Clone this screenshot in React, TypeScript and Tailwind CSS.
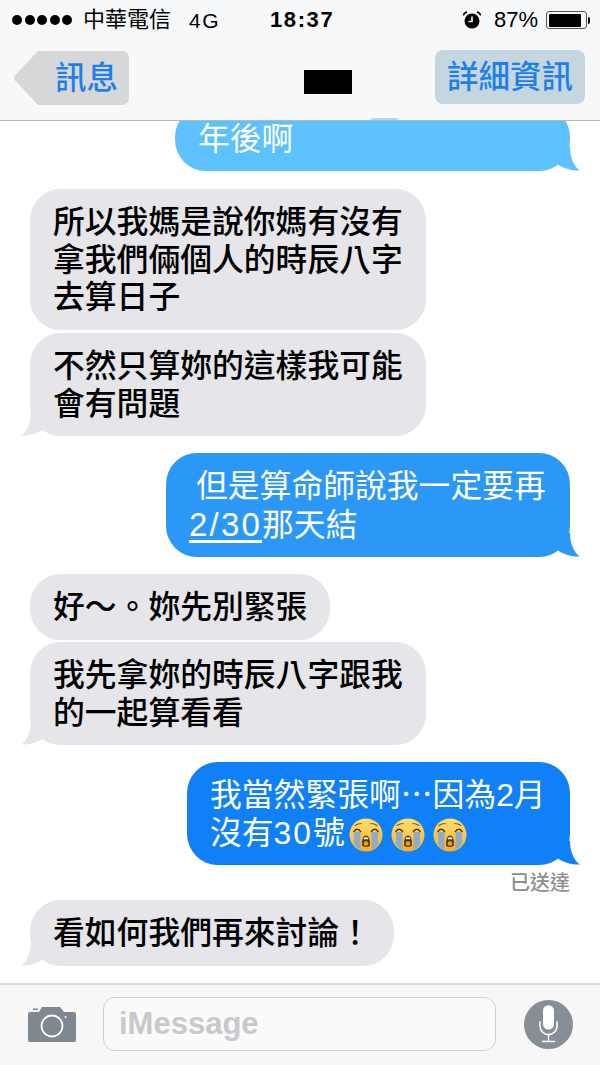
import React from 'react'

const FONT = '[font-family:"Liberation_Sans","Noto_Sans_CJK_TC",sans-serif]'

type BubbleProps = {
  side: 'left' | 'right'
  color: string
  className?: string
  children: React.ReactNode
  tail?: boolean
}

const Tail = ({ side, fill }: { side: 'left' | 'right'; fill: string }) => (
  <svg
    viewBox="0 0 24 24"
    className={side === 'right' ? 'absolute bottom-0 right-[-10px] h-6 w-6' : 'absolute bottom-0 left-[-9px] h-6 w-6 -scale-x-100'}
    fill={fill}
  >
    <path d="M14 0C14 10 18 20 24 23.5C18 24 8 22 1 17L0 0Z" />
  </svg>
)

const Bubble = ({ side, color, className, children, tail = true }: BubbleProps) => {
  const bg = color === '#e5e5ea' ? 'bg-[#e5e5ea] text-black font-medium' : color === '#5cc1fd' ? 'bg-[#5cc1fd] text-white' : color === '#2b98f8' ? 'bg-[#2b98f8] text-white' : 'bg-[#0f80f7] text-white'
  return (
    <div className={`relative rounded-[31px] pb-[13px] pl-[23px] pt-[15px] text-[31.8px] leading-[37.5px] ${bg} ${side === 'right' ? 'self-end mr-[30px]' : 'self-start ml-[30px]'} ${className ?? ''}`}>
      {children}
      {tail && <Tail side={side} fill={color} />}
    </div>
  )
}

// loudly crying face
const CryFace = () => (
  <svg viewBox="0 0 34 34" className="mx-[4px] inline-block h-[34px] w-[34px] align-[-8px]">
    <defs>
      <linearGradient id="cry" x1="0" y1="0" x2="0" y2="1">
        <stop offset="0" stopColor="#ffe070" />
        <stop offset="1" stopColor="#f8ac2c" />
      </linearGradient>
    </defs>
    <circle cx="17" cy="17" r="16.5" fill="url(#cry)" />
    <path d="M5 14h6.5v17.5C8.5 30 6 28 5 26Z" fill="#8fabc8" />
    <path d="M22.5 14H29v12c-1 2-3.500 4-6.500 5.500Z" fill="#8fabc8" />
    <path d="M5 13.500c1.500-3 5-3 6.500 0M22.500 13.500c1.500-3 5-3 6.500 0" fill="none" stroke="#4a3410" strokeWidth="1.600" strokeLinecap="round" />
    <path d="M6 7.500c2-1.500 4-2 6-2M28 7.500c-2-1.500-4-2-6-2" fill="none" stroke="#8a5a10" strokeWidth="1.200" strokeLinecap="round" />
    <path d="M13 27c0-6.500 1.500-9.500 4-9.500S21 20.500 21 27c0 2.500-8 2.500-8 0Z" fill="#5b3a12" />
    <path d="M14.600 20c1.200-1 3.600-1 4.800 0l-.5 1.300h-3.800Z" fill="#fff" />
    <ellipse cx="17" cy="25.500" rx="2.400" ry="2.200" fill="#e9a12f" />
  </svg>
)

const StatusBar = () => (
  <div className="flex h-[40px] items-center pl-[12px] pr-[10px] text-[22px] text-black">
    <div className="flex gap-[2.500px]">
      {[0, 1, 2, 3, 4].map((i) => (
        <span key={i} className="h-[10px] w-[10px] rounded-full bg-black" />
      ))}
    </div>
    <span className="ml-[11px] w-[106px] leading-none">中華電信</span>
    <span className="text-[21px] leading-none tracking-[1.5px]">4G</span>
    <span className="ml-[50px] text-[22px] font-bold leading-none tracking-[1.6px]">18:37</span>
    <svg viewBox="0 0 20 20" className="ml-auto mr-[2px] h-[20px] w-[20px]">
      <circle cx="10" cy="11" r="7.500" fill="#000" />
      <path d="M10 6.500V11.500H6.500" fill="none" stroke="#fff" strokeWidth="1.600" />
      <path d="M1.500 5.500Q2 2.500 5 2M18.500 5.500Q18 2.500 15 2" fill="none" stroke="#000" strokeWidth="1.500" />
    </svg>
    <span className="ml-[10px] leading-none">87%</span>
    <div className="ml-[8px] flex items-center">
      <div className="h-[18px] w-[41px] rounded-[3px] border border-[#555] p-[1.500px]">
        <div className="h-full w-[90%] rounded-[1px] bg-black" />
      </div>
      <div className="ml-[1px] h-[7px] w-[2px] rounded-r-full bg-black" />
    </div>
  </div>
)

const NavBar = () => (
  <div className="flex h-[80px] items-start pl-[14px] pr-[15px] pt-[10px]">
    <div className="relative ml-[24px] mt-[1px] flex h-[54px] w-[91px] items-center rounded-r-[7px] bg-[#d6d7d8] pl-[17px] pt-[1px] text-[31.5px] font-medium leading-none text-[#1f7fe8]">
      <svg viewBox="0 0 24 54" className="absolute left-[-24px] top-0 h-[54px] w-[24px]" fill="#d6d7d8">
        <path d="M24 0V54L1 29.500Q-1 27 1 24.500Z" />
      </svg>
      訊息
    </div>
    <div className="ml-[175px] mt-[20px] h-[24px] w-[48px] bg-black" />
    <div className="ml-auto flex h-[54px] w-[150px] items-center justify-center rounded-[8px] bg-[#c5d6e0] pt-[2px] text-[31.5px] font-medium leading-none text-[#1f7fe8]">
      詳細資訊
    </div>
  </div>
)

const Composer = () => (
  <div className="flex h-[82px] items-center border-t-2 border-[#d9d9d9] bg-[#f7f7f8] pb-[2px] pl-[28px] pr-[27px]">
    <svg viewBox="0 0 48 36" className="h-[36px] w-[48px]">
      <path d="M2 6h9l3-5h18l4 5h10a2 2 0 0 1 2 2v26a2 2 0 0 1-2 2H2a2 2 0 0 1-2-2V8a2 2 0 0 1 2-2Z" fill="#7f8791" />
      <circle cx="24" cy="20" r="10.500" fill="none" stroke="#fff" strokeWidth="1.800" />
      <circle cx="37.500" cy="11" r="1" fill="#fff" />
      <rect x="5" y="2.500" width="5" height="1.500" fill="#7f8791" />
    </svg>
    <div className="ml-[27px] flex h-[54px] flex-1 items-center rounded-[12px] border border-[#cfcfd3] bg-[#fafafa] pl-[15px] text-[31px] font-bold text-[#c8c8cd]">
      iMessage
    </div>
    <div className="ml-[28px] flex h-[49px] w-[49px] items-center justify-center rounded-full bg-[#878e98]">
      <svg viewBox="0 0 28 40" className="h-[38px] w-[27px]" fill="none" stroke="#fff" strokeWidth="1.600">
        <rect x="9" y="1" width="10" height="24" rx="5" fill="#fff" />
        <path d="M5 17v5a9 9 0 0 0 18 0v-5M14 31v7M7 38.500h14" />
      </svg>
    </div>
  </div>
)

export default function App() {
  return (
    <div className={`flex h-[1065px] w-[600px] flex-col overflow-hidden bg-white ${FONT}`}>
      <div className="relative z-10 h-[121px] shrink-0 border-b border-[#b8b8b8] bg-[#f7f8f9]">
        <StatusBar />
        <NavBar />
        <div className="absolute bottom-0 left-[371px] h-[2px] w-[27px] rounded-t-full bg-[#a5dcf8]" />
      </div>
      <div className="flex flex-1 flex-col">
        <Bubble side="right" color="#5cc1fd" className="mt-[-15.500px] w-[395px]">年後啊</Bubble>

        <Bubble side="left" color="#e5e5ea" className="mt-[18px] w-[396px]" tail={false}>
          所以我媽是說你媽有沒有<br />拿我們倆個人的時辰八字<br />去算日子
        </Bubble>
        <Bubble side="left" color="#e5e5ea" className="mt-[3.500px] w-[396px]">
          不然只算妳的這樣我可能<br />會有問題
        </Bubble>

        <Bubble side="right" color="#2b98f8" className="mt-[17px] w-[404px]">
          <span className="ml-[7px]">但是算命師說我一定要再</span><br /><span className="text-[33px] tracking-[2.2px] underline underline-offset-[4px]">2/30</span>那天結
        </Bubble>

        <Bubble side="left" color="#e5e5ea" className="mt-[17px] w-[300px]" tail={false}>
          好～。妳先別緊張
        </Bubble>
        <Bubble side="left" color="#e5e5ea" className="mt-[2.500px] w-[396px]">
          我先拿妳的時辰八字跟我<br />的一起算看看
        </Bubble>

        <Bubble side="right" color="#0f80f7" className="mt-[17px] w-[383px]">
          我當然緊張啊⋯因為2月<br />沒有<span className="tracking-[2px]">30</span>號<CryFace /><CryFace /><CryFace />
        </Bubble>
        <div className="mr-[30px] mt-[6px] self-end text-[20px] font-medium leading-[24px] text-[#8e8e93]">已送達</div>

        <Bubble side="left" color="#e5e5ea" className="mt-[5px] w-[364px]">
          看如何我們再來討論！
        </Bubble>
      </div>
      <Composer />
    </div>
  )
}
